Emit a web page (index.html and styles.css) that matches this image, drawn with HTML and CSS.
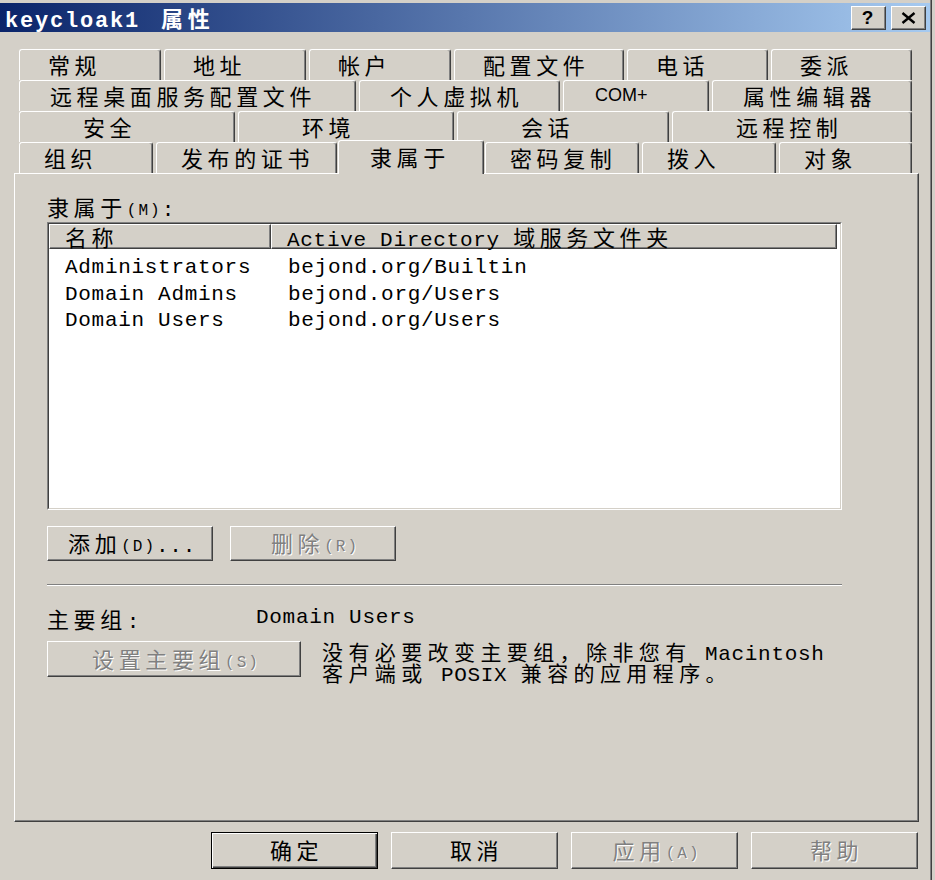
FILE: index.html
```html
<!DOCTYPE html>
<html lang="zh-CN">
<head>
<meta charset="utf-8">
<title>keycloak1 属性</title>
<link rel="stylesheet" href="styles.css">
</head>
<body>
<div class="window">
  <div class="titlebar">
    <div class="title">keycloak1 <span class="zh tz">属性</span></div>
    <div class="tbtns">
      <div class="tbtn qm">?</div>
      <div class="tbtn"><svg width="15" height="12" viewBox="0 0 15 12"><path d="M1.5 1 L13.5 11 M13.5 1 L1.5 11" stroke="#000" stroke-width="2.4" fill="none"/></svg></div>
    </div>
  </div>

  <div class="tabs">
    <div class="tabrow r1">
      <div class="tab"><span class="zh">常规</span></div>
      <div class="tab"><span class="zh">地址</span></div>
      <div class="tab"><span class="zh">帐户</span></div>
      <div class="tab"><span class="zh">配置文件</span></div>
      <div class="tab"><span class="zh">电话</span></div>
      <div class="tab"><span class="zh">委派</span></div>
    </div>
    <div class="tabrow r2">
      <div class="tab"><span class="zh">远程桌面服务配置文件</span></div>
      <div class="tab"><span class="zh">个人虚拟机</span></div>
      <div class="tab com">COM+</div>
      <div class="tab"><span class="zh">属性编辑器</span></div>
    </div>
    <div class="tabrow r3">
      <div class="tab"><span class="zh">安全</span></div>
      <div class="tab"><span class="zh">环境</span></div>
      <div class="tab"><span class="zh">会话</span></div>
      <div class="tab"><span class="zh">远程控制</span></div>
    </div>
    <div class="tabrow r4">
      <div class="tab"><span class="zh">组织</span></div>
      <div class="tab"><span class="zh">发布的证书</span></div>
      <div class="tab active"><span class="zh">隶属于</span></div>
      <div class="tab"><span class="zh">密码复制</span></div>
      <div class="tab"><span class="zh">拨入</span></div>
      <div class="tab"><span class="zh">对象</span></div>
    </div>
  </div>

  <div class="panel">
    <div class="label"><span class="zh">隶属于</span><span class="acc">(M)</span>:</div>
    <div class="list">
      <div class="list-inner">
        <div class="lhead">
          <div class="hcell h1"><span class="zh">名称</span></div>
          <div class="hcell h2">Active Directory <span class="zh">域服务文件夹</span></div>
        </div>
        <div class="rows">
          <div class="row"><div class="c1">Administrators</div><div class="c2">bejond.org/Builtin</div></div>
          <div class="row"><div class="c1">Domain Admins</div><div class="c2">bejond.org/Users</div></div>
          <div class="row"><div class="c1">Domain Users</div><div class="c2">bejond.org/Users</div></div>
        </div>
      </div>
    </div>

    <div class="btnrow">
      <div class="btn pbtn"><span class="bt"><span class="zh">添加</span><span class="acc">(D)</span>...</span></div>
      <div class="btn pbtn dis"><span class="bt"><span class="zh">删除</span><span class="acc">(R)</span></span></div>
    </div>

    <div class="sep"></div>

    <div class="pg">
      <div class="pglabel"><span class="zh">主要组</span>:</div>
      <div class="pgval">Domain Users</div>
    </div>

    <div class="pgrow">
      <div class="btn setbtn dis"><span class="bt"><span class="zh">设置主要组</span><span class="acc">(S)</span></span></div>
      <div class="desc"><span class="zh">没有必要改变主要组，除非您有</span> Macintosh<br><span class="zh">客户端或</span> POSIX <span class="zh">兼容的应用程序。</span></div>
    </div>
  </div>

  <div class="footer">
    <div class="btn fbtn default"><span class="bt"><span class="zh">确定</span></span></div>
    <div class="btn fbtn"><span class="bt"><span class="zh">取消</span></span></div>
    <div class="btn fbtn dis"><span class="bt"><span class="zh">应用</span><span class="acc">(A)</span></span></div>
    <div class="btn fbtn dis"><span class="bt"><span class="zh">帮助</span></span></div>
  </div>
</div>
</body>
</html>
```
FILE: styles.css
```css
* { box-sizing: border-box; }
html, body { margin: 0; padding: 0; }
body {
  background: #d4d0c8;
  width: 935px;
  height: 880px;
  overflow: hidden;
  font-family: "Liberation Mono", "Noto Sans CJK SC", monospace;
  font-size: 21px;
  letter-spacing: 0.7px;
  color: #000;
}
.zh {
  font-family: "Noto Sans CJK SC", sans-serif;
  font-size: 22px;
  letter-spacing: 4.6px;
}
.acc {
  font-family: "Liberation Mono", monospace;
  font-size: 16px;
  letter-spacing: 2px;
  line-height: 0;
  vertical-align: 1px;
}
.window {
  width: 931px;
  height: 880px;
  padding-top: 3px;
  border-right: 1px solid #808080;
  box-shadow: 1px 0 0 #404040;
}

/* title bar */
.titlebar {
  height: 29px;
  display: flex;
  align-items: center;
  justify-content: space-between;
  padding: 0 4px 0 5px;
  background: linear-gradient(to right, #0a246a, #a6caf0);
}
.title {
  color: #fff;
  font-weight: bold;
  font-size: 22px;
  letter-spacing: 1.8px;
  white-space: nowrap;
}
.title .tz { font-weight: bold; margin-left: 6px; }
.tbtns { display: flex; gap: 5px; }
.tbtn {
  width: 35px;
  height: 24px;
  display: flex;
  align-items: center;
  justify-content: center;
  background: #d4d0c8;
  border: 1px solid;
  border-color: #fff #404040 #404040 #fff;
  box-shadow: inset -1px -1px 0 #808080;
}
.qm {
  font-family: "Liberation Sans", sans-serif;
  font-weight: bold;
  font-size: 19px;
  letter-spacing: 0;
  padding-right: 2px;
}

/* tabs */
.tabs { margin-top: 17px; }
.tabrow {
  display: grid;
  margin-left: 19px;
  width: 893px;
  height: 31px;
  column-gap: 3px;
}
.r1 { grid-template-columns: 142px 142px 142px 170px 141px 141px; }
.r2 { grid-template-columns: 337px 201px 146px 200px; }
.r3 { grid-template-columns: 216px 216px 212px 240px; }
.r4 { grid-template-columns: 134px 181px 142px 154px 134px 133px; }
.tab {
  background: #d4d0c8;
  border-top: 1px solid #fff;
  border-left: 1px solid #fff;
  border-right: 1px solid #404040;
  box-shadow: inset -1px 0 0 #808080;
  border-radius: 3px 3px 0 0;
  line-height: 29px;
  white-space: nowrap;
  overflow: hidden;
}
.r1 .tab { padding-left: 28px; }
.r2 .tab { padding-left: 30px; }
.r3 .tab { padding-left: 63px; }
.r4 .tab { padding-left: 24px; }
.tab.com {
  font-family: "Liberation Sans", sans-serif;
  font-size: 18px;
  letter-spacing: 0;
  padding-left: 31px;
}
.r4 .tab.active {
  position: relative;
  z-index: 1;
  margin: -2px -2px -1px -2px;
  padding-left: 31px;
  line-height: 31px;
}

/* panel */
.panel {
  margin-left: 14px;
  width: 905px;
  height: 649px;
  border: 1px solid;
  border-color: #fff #404040 #404040 #fff;
  box-shadow: inset -1px -1px 0 #808080;
  padding: 20px 0 0 32px;
}
.label {
  height: 24px;
  line-height: 24px;
  white-space: nowrap;
}
.list {
  margin-top: 4px;
  width: 795px;
  height: 288px;
  border: 1px solid;
  border-color: #808080 #fff #fff #808080;
}
.list-inner {
  height: 100%;
  background: #fff;
  border: 1px solid;
  border-color: #404040 #d4d0c8 #d4d0c8 #404040;
}
.lhead { display: flex; }
.hcell {
  height: 25px;
  line-height: 23px;
  background: #d4d0c8;
  border: 1px solid;
  border-color: #fff #404040 #404040 #fff;
  box-shadow: inset -1px -1px 0 #808080;
  padding-left: 15px;
  white-space: nowrap;
}
.h1 { width: 222px; }
.h2 { width: 566px; }
.rows { padding-top: 6px; }
.row {
  display: flex;
  height: 26.7px;
  line-height: 26.7px;
  white-space: nowrap;
}
.c1 { width: 222px; padding-left: 16px; }
.c2 { padding-left: 17px; }

/* buttons */
.btn {
  display: flex;
  align-items: center;
  justify-content: center;
  background: #d4d0c8;
  border: 1px solid;
  border-color: #fff #404040 #404040 #fff;
  box-shadow: inset -1px -1px 0 #808080;
  white-space: nowrap;
}
.bt { line-height: 24px; padding-left: 4px; padding-top: 2px; }
.btn.default {
  border: 1px solid #000;
  box-shadow: inset 1px 1px 0 #fff, inset -1px -1px 0 #404040, inset -2px -2px 0 #808080;
}
.dis {
  color: #808080;
  text-shadow: 1px 1px 0 #fff;
}
.btnrow {
  margin-top: 16px;
  display: flex;
  gap: 17px;
}
.pbtn { width: 166px; height: 35px; }
.sep {
  margin-top: 23px;
  width: 795px;
  height: 2px;
  border-top: 1px solid #808080;
  border-bottom: 1px solid #fff;
}
.pg {
  margin-top: 20px;
  height: 24px;
  line-height: 24px;
  display: flex;
  white-space: nowrap;
}
.pglabel { width: 209px; }
.pgrow {
  margin-top: 11px;
  display: flex;
  align-items: flex-start;
  gap: 21px;
}
.setbtn { width: 254px; height: 36px; }
.desc {
  margin-top: 3px;
  line-height: 21px;
  white-space: nowrap;
}
.desc .zh {
  line-height: 0;
  font-size: 21px;
  letter-spacing: 5.4px;
}

/* footer */
.footer {
  margin-top: 10px;
  display: flex;
  justify-content: flex-end;
  gap: 13px;
  padding-right: 12px;
}
.fbtn { width: 167px; height: 37px; }
```
